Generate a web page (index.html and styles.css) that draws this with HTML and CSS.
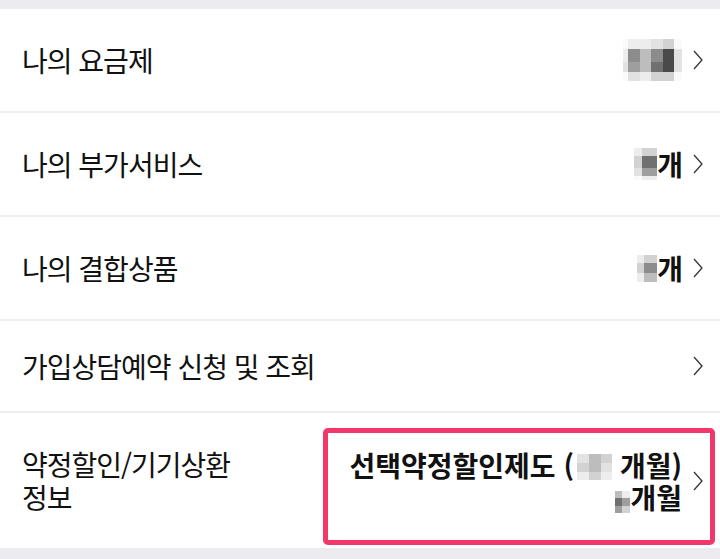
FILE: index.html
```html
<!DOCTYPE html>
<html lang="ko">
<head>
    <meta charset="UTF-8">
    <meta name="viewport" content="width=device-width, initial-scale=1.0">
    <title>나의 가입정보</title>
    <link rel="stylesheet" href="styles.css">
</head>
<body>
    <ul class="menu">
        <li class="row row-plan">
            <span class="label">나의 요금제</span>
            <span class="value">
                <span class="blur blur-plan">
                    <i class="c0"></i><i class="c1"></i><i class="c1"></i><i class="c2"></i><i class="c3"></i><i class="c0"></i>
                    <i class="c1"></i><i class="c6"></i><i class="c4"></i><i class="c6"></i><i class="c8"></i><i class="c2"></i>
                    <i class="c2"></i><i class="c5"></i><i class="c4"></i><i class="c7"></i><i class="c8"></i><i class="c2"></i>
                    <i class="c0"></i><i class="c2"></i><i class="c1"></i><i class="c3"></i><i class="c3"></i><i class="c0"></i>
                </span>
            </span>
            <svg class="chevron" viewBox="0 0 12 22"><path d="M2 2 L10 11 L2 20"/></svg>
        </li>
        <li class="row">
            <span class="label">나의 부가서비스</span>
            <span class="value strong">
                <span class="blur blur-count">
                    <i class="c1"></i><i class="c3"></i>
                    <i class="c3"></i><i class="c7"></i>
                    <i class="c2"></i><i class="c5"></i>
                    <i class="c0"></i><i class="c1"></i>
                </span>개
            </span>
            <svg class="chevron" viewBox="0 0 12 22"><path d="M2 2 L10 11 L2 20"/></svg>
        </li>
        <li class="row">
            <span class="label">나의 결합상품</span>
            <span class="value strong">
                <span class="blur blur-count small">
                    <i class="c1"></i><i class="c3"></i>
                    <i class="c3"></i><i class="c6"></i>
                    <i class="c1"></i><i class="c4"></i>
                </span>개
            </span>
            <svg class="chevron" viewBox="0 0 12 22"><path d="M2 2 L10 11 L2 20"/></svg>
        </li>
        <li class="row row-short">
            <span class="label">가입상담예약 신청 및 조회</span>
            <span class="value"></span>
            <svg class="chevron" viewBox="0 0 12 22"><path d="M2 2 L10 11 L2 20"/></svg>
        </li>
        <li class="row row-tall">
            <span class="label label-wrap">약정할인/기기상환 정보</span>
            <span class="value strong stacked">
                <span class="line">선택약정할인제도 (<span class="blur blur-term">
                    <i class="c2"></i><i class="c4"></i><i class="c3"></i>
                    <i class="c3"></i><i class="c4"></i><i class="c2"></i>
                    <i class="c1"></i><i class="c3"></i><i class="c1"></i>
                </span> 개월)</span>
                <span class="line"><span class="blur blur-month">
                    <i class="c4"></i><i class="c1"></i>
                    <i class="c7"></i><i class="c5"></i>
                    <i class="c5"></i><i class="c3"></i>
                </span>개월</span>
            </span>
            <svg class="chevron" viewBox="0 0 12 22"><path d="M2 2 L10 11 L2 20"/></svg>
            <div class="highlight"></div>
        </li>
    </ul>
</body>
</html>
```

FILE: styles.css
```css
body {
    margin: 0;
    background-color: #ececf0;
    font-family: "Noto Sans CJK KR", "Noto Sans", sans-serif;
    color: #111;
}
.menu {
    list-style: none;
    margin: 9px 0 0;
    padding: 0;
    background-color: #fff;
}
.row {
    position: relative;
    display: flex;
    align-items: center;
    height: 102px;
    padding: 0 16px 0 22px;
    border-bottom: 2px solid #efefef;
}
.row-short {
    height: 90px;
}
.row-tall {
    height: 135px;
    border-bottom: none;
}
.label {
    flex: 1;
    font-size: 28px;
    letter-spacing: -1px;
    line-height: 33px;
}
.label-wrap {
    flex: none;
    width: 235px;
    margin-right: auto;
}
.value {
    display: flex;
    align-items: center;
    font-size: 28px;
    letter-spacing: -1px;
}
.strong {
    font-weight: 700;
}
.stacked {
    flex-direction: column;
    align-items: flex-end;
    line-height: 31px;
    letter-spacing: 0;
    margin-top: 2px;
}
.line {
    display: block;
    white-space: nowrap;
}
.chevron {
    width: 12px;
    height: 22px;
    margin-left: 10px;
    flex: none;
}
.chevron path {
    fill: none;
    stroke: #333;
    stroke-width: 1.3;
}
.blur {
    display: inline-grid;
    vertical-align: middle;
}
.blur i {
    display: block;
}
.blur-plan {
    grid-template-columns: 5px 12px 11px 12px 11px 8px;
    grid-template-rows: 10px 13px 10px 9px;
}
.blur-count {
    grid-template-columns: 8px 15px;
    grid-template-rows: 8px 12px 8px 4px;
}
.blur-count.small {
    grid-template-columns: 7px 13px;
    grid-template-rows: 8px 10px 9px;
}
.blur-term {
    grid-template-columns: 12px 12px 11px;
    grid-template-rows: 9px 9px 8px;
    margin-left: 3px;
    position: relative;
    top: -2px;
}
.blur-month {
    grid-template-columns: 7px 8px;
    grid-template-rows: 7px 8px 7px;
}
.c0 { background-color: #fafafa; }
.c1 { background-color: #ededed; }
.c2 { background-color: #e2e2e2; }
.c3 { background-color: #d2d2d2; }
.c4 { background-color: #bdbdbd; }
.c5 { background-color: #9e9e9e; }
.c6 { background-color: #8c8c8c; }
.c7 { background-color: #707070; }
.c8 { background-color: #4a4a4a; }
.highlight {
    position: absolute;
    left: 323px;
    top: 15px;
    width: 382px;
    height: 107px;
    border: 5px solid #f2386b;
    border-radius: 5px;
}
```
